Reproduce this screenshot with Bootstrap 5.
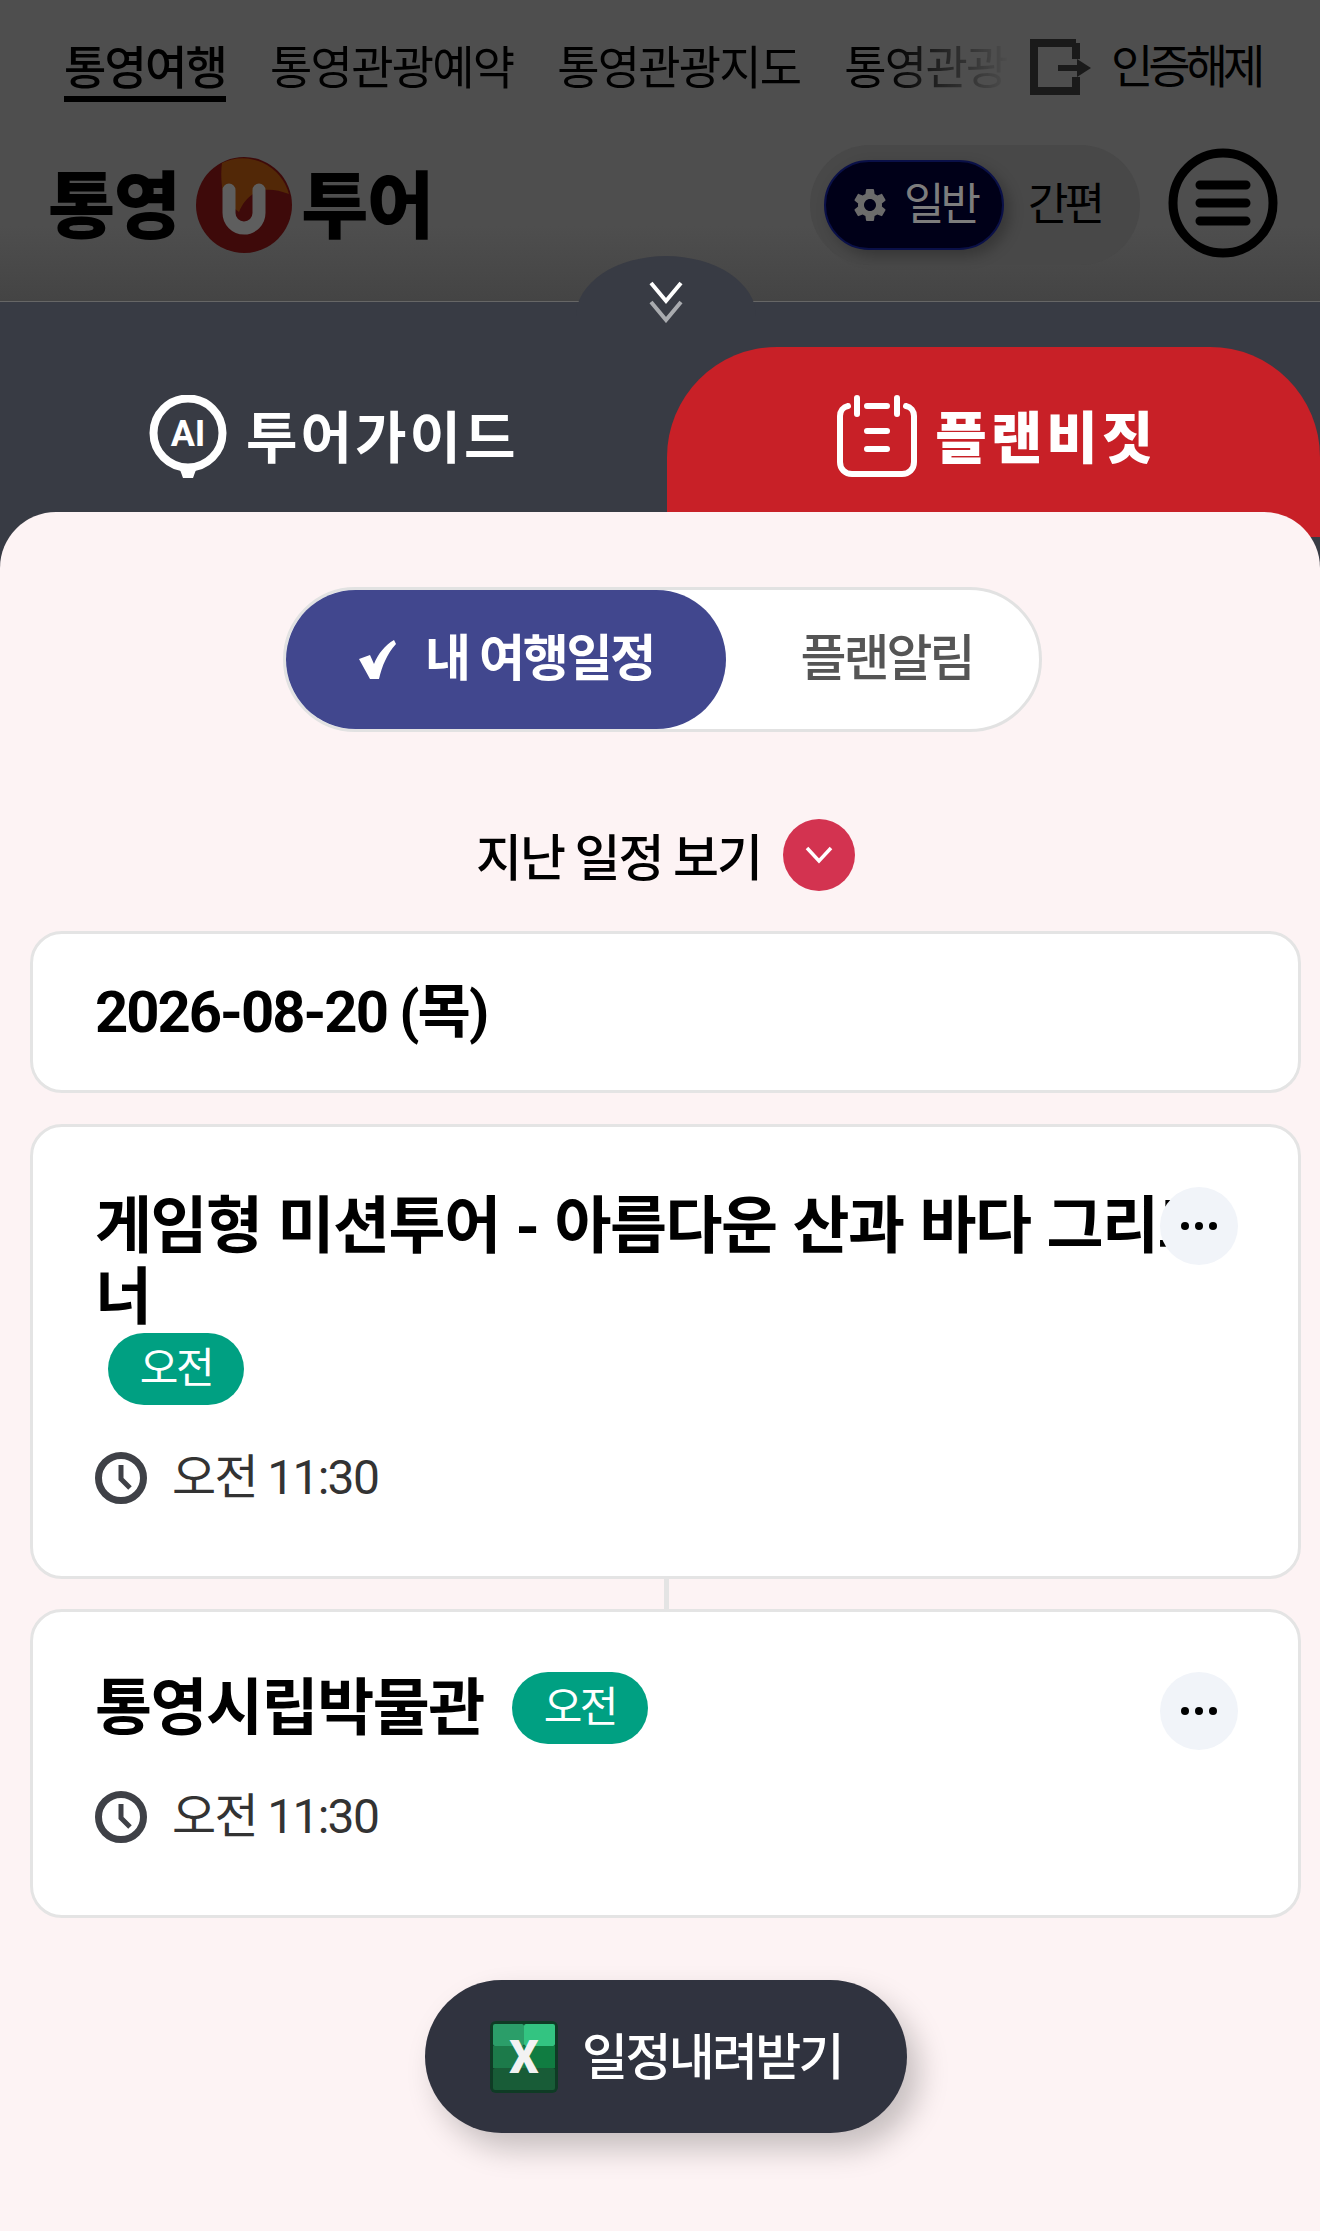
<!DOCTYPE html>
<html lang="ko">
<head>
    <meta charset="UTF-8">
    <meta name="viewport" content="width=device-width, initial-scale=1.0">
    <title>통영 U 투어</title>
    <link href="https://cdn.jsdelivr.net/npm/bootstrap@5.3.0/dist/css/bootstrap.min.css" rel="stylesheet">
    <style>
        body {
            width: 1320px;
            min-height: 2231px;
            background: #fdf3f4;
            font-family: Roboto, "Noto Sans CJK KR", sans-serif;
            overflow-x: hidden;
        }
        /* dimmed header behind the sheet */
        .top-area {
            height: 301px;
            background: linear-gradient(#4e4e4e 75%, #444 100%);
            color: #000;
        }
        .top-links {
            height: 130px;
            padding: 43px 58px 0 64px;
        }
        .top-menu {
            width: 946px;
            gap: 44px;
            -webkit-mask-image: linear-gradient(to right, #000 820px, transparent 946px);
            mask-image: linear-gradient(to right, #000 820px, transparent 946px);
        }
        .top-menu a {
            color: #000;
            font-size: 46px;
            line-height: 50px;
            letter-spacing: -1.8px;
            padding-bottom: 3px;
            white-space: nowrap;
            text-decoration: none;
        }
        .top-menu a.on {
            font-weight: 500;
            border-bottom: 6px solid #000;
        }
        .logout-link {
            font-size: 46px;
            line-height: 60px;
            letter-spacing: -5px;
            white-space: nowrap;
            margin-left: 20px;
            gap: 19px;
            margin-top: -6px;
        }
        .logo-row {
            padding: 15px 42px 0 48px;
        }
        .logo-txt {
            font-size: 73px;
            font-weight: 900;
            line-height: 1;
            letter-spacing: -1.5px;
            padding-top: 4px;
        }
        .mode-switch {
            width: 330px;
            height: 120px;
            padding: 15px 14px;
            margin-right: 28px;
            background: #484848;
            border-radius: 60px;
        }
        .mode-on {
            width: 180px;
            height: 90px;
            padding-left: 24px;
            gap: 14px;
            background: #000018;
            border: 2px solid #0a1048;
            border-radius: 45px;
            color: #7d7d7d;
            font-size: 44px;
            letter-spacing: -4px;
            box-shadow: 6px 6px 14px rgba(0, 0, 0, .25);
        }
        .mode-off {
            margin-left: 24px;
            font-size: 44px;
            letter-spacing: -4px;
        }
        /* bottom sheet */
        .sheet {
            background: #383b44;
            border-top: 1px solid #666;
            padding-top: 45px;
        }
        .sheet-handle {
            top: -46px;
            left: 576px;
            width: 180px;
            height: 80px;
            padding-top: 25px;
            background: #383b44;
            border-radius: 90px 90px 0 0 / 60px 60px 0 0;
            text-align: center;
        }
        .tab-item {
            width: 50.5%;
            height: 190px;
            padding-top: 48px;
            gap: 18px;
            color: #fff;
            font-size: 56px;
            font-weight: 700;
            line-height: 80px;
            letter-spacing: 3px;
        }
        .tab-red {
            width: 49.5%;
            padding-left: 8px;
            background: #c82027;
            border-radius: 110px 110px 0 0;
            font-weight: 900;
            letter-spacing: 4px;
        }
        .panel {
            margin-top: -25px;
            min-height: 1719px;
            padding: 75px 19px 0 30px;
            background: #fdf3f4;
            border-radius: 56px 56px 0 0;
        }
        .plan-toggle {
            width: 759px;
            height: 145px;
            margin-left: 253px;
            background: #fff;
            border: 3px solid #e2e2e2;
            border-radius: 73px;
        }
        .plan-on {
            width: 440px;
            height: 139px;
            gap: 29px;
            background: #41478e;
            border-radius: 70px;
            color: #fff;
            font-size: 50px;
            font-weight: 700;
            letter-spacing: -2.2px;
        }
        .plan-off {
            width: 313px;
            padding-left: 8px;
            color: #555;
            font-size: 50px;
            font-weight: 500;
            letter-spacing: -3px;
        }
        .past-row {
            height: 72px;
            margin: 87px 0 40px 0;
            gap: 22px;
            font-size: 50px;
            font-weight: 500;
            letter-spacing: -2px;
            color: #000;
        }
        .past-btn {
            width: 72px;
            height: 72px;
            background: #d33350;
            border-radius: 50%;
        }
        .sched-card {
            padding: 0 60px 0 62px;
            background: #fff;
            border: 3px solid #e4e4e4;
            border-radius: 32px;
            color: #000;
        }
        .date-card {
            height: 162px;
            margin-bottom: 31px;
            font-size: 58px;
            font-weight: 700;
            letter-spacing: -2px;
        }
        .sched-title {
            font-size: 62px;
            font-weight: 700;
            line-height: 71px;
            letter-spacing: -1.5px;
            word-spacing: 2px;
            margin: 0;
        }
        .tag-am {
            width: 136px;
            height: 72px;
            line-height: 72px;
            padding: 0;
            background: #00a082;
            font-size: 42px;
            font-weight: 400;
            letter-spacing: -2.5px;
            color: #fff;
        }
        .tag-wrap {
            margin-left: 13px;
        }
        .tag-side {
            margin-left: 28px;
        }
        .time-row {
            gap: 25px;
            font-size: 48px;
            line-height: 56px;
            letter-spacing: -1.7px;
            color: #333;
        }
        .more-btn {
            top: 60px;
            right: 60px;
            width: 78px;
            height: 78px;
            background: #f1f4f9;
            border-radius: 50%;
            gap: 6px;
        }
        .more-btn i {
            width: 8px;
            height: 8px;
            background: #000;
            border-radius: 50%;
        }
        .card-one {
            height: 455px;
            padding-top: 64px;
        }
        .card-one .time-row {
            margin-top: 45px;
        }
        .card-two {
            height: 309px;
            padding-top: 60px;
        }
        .card-two .time-row {
            margin-top: 45px;
        }
        .link-line {
            width: 5px;
            height: 30px;
            margin-left: 634px;
            background: #e4e4e4;
        }
        .excel-btn {
            width: 482px;
            height: 153px;
            margin: 62px 0 0 395px;
            gap: 24px;
            background: #30333f;
            border-radius: 77px;
            color: #fff;
            font-size: 50px;
            font-weight: 500;
            letter-spacing: -2.7px;
            box-shadow: 12px 16px 30px rgba(0, 0, 0, .22);
        }
    </style>
</head>
<body>
    <!-- dimmed header -->
    <div class="top-area">
        <div class="top-links d-flex align-items-start">
            <div class="top-menu d-flex align-items-start">
                <a class="on" href="#">통영여행</a>
                <a href="#">통영관광예약</a>
                <a href="#">통영관광지도</a>
                <a href="#">통영관광</a>
            </div>
            <div class="logout-link d-flex align-items-center">
                <svg width="62" height="56" viewBox="0 0 62 56" fill="none" stroke="#1a1a1a" stroke-width="8">
                    <path d="M46 4H4v48h42V38"/>
                    <path d="M46 4v16"/>
                    <path d="M28 29h22" stroke-width="6"/>
                    <path d="M47 20l14 9-14 9z" fill="#1a1a1a" stroke="none"/>
                </svg>
                <span>인증해제</span>
            </div>
        </div>
        <div class="logo-row d-flex align-items-center justify-content-between">
            <div class="d-flex align-items-center">
                <span class="logo-txt">통영</span>
                <svg class="ms-3 me-2" width="98" height="98" viewBox="0 0 98 98">
                    <circle cx="49" cy="49" r="48" fill="#3e0a0a"/>
                    <path d="M27 7a48 48 0 0 1 67 31c-10-4-18-5-26-4-12 2-20 12-24 22-8-6-15-12-17-25-1-10-1-17 0-24z" fill="#522807"/>
                    <path d="M34 34v23a15 15 0 0 0 30 0V34" fill="none" stroke="#5e5e5e" stroke-width="13" stroke-linecap="round"/>
                </svg>
                <span class="logo-txt">투어</span>
            </div>
            <div class="d-flex align-items-center">
                <div class="mode-switch d-flex align-items-center">
                    <div class="mode-on d-flex align-items-center">
                        <svg width="40" height="40" viewBox="0 0 24 24" fill="#6b6b6b"><path d="M19.14,12.94c.04-.3.06-.61.06-.94 0-.32-.02-.64-.07-.94l2.03-1.58c.18-.14.23-.41.12-.61l-1.92-3.32c-.12-.22-.37-.29-.59-.22l-2.39.96c-.5-.38-1.03-.7-1.62-.94l-.36-2.54c-.04-.24-.24-.41-.48-.41h-3.84c-.24,0-.43.17-.47.41l-.36,2.54c-.59.24-1.13.57-1.62.94l-2.39-.96c-.22-.08-.47,0-.59.22L2.74,8.87c-.12.21-.08.47.12.61l2.03,1.58c-.05.3-.09.63-.09.94s.02.64.07.94l-2.03,1.58c-.18.14-.23.41-.12.61l1.92,3.32c.12.22.37.29.59.22l2.39-.96c.5.38,1.03.7,1.62.94l.36,2.54c.05.24.24.41.48.41h3.84c.24,0,.44-.17.47-.41l.36-2.54c.59-.24,1.13-.56,1.62-.94l2.39.96c.22.08.47,0,.59-.22l1.92-3.32c.12-.22.07-.47-.12-.61l-2.01-1.58zM12,15.6c-1.98,0-3.6-1.62-3.6-3.6s1.62-3.6,3.6-3.6,3.6,1.62,3.6,3.6-1.62,3.6-3.6,3.6z"/></svg>
                        <span>일반</span>
                    </div>
                    <span class="mode-off">간편</span>
                </div>
                <svg class="mb-1" width="110" height="110" viewBox="0 0 110 110" fill="none" stroke="#000" stroke-linecap="round">
                    <circle cx="55" cy="55" r="50" stroke-width="9"/>
                    <path d="M32 37h46M32 55h46M32 73h46" stroke-width="9"/>
                </svg>
            </div>
        </div>
    </div>

    <!-- bottom sheet -->
    <div class="sheet position-relative">
        <div class="sheet-handle position-absolute">
            <svg width="34" height="42" viewBox="0 0 34 42" fill="none" stroke-width="4">
                <path d="M2 2l15 18L32 2" stroke="#fff"/>
                <path d="M2 21l15 18 15-18" stroke="#a9abaf"/>
            </svg>
        </div>
        <div class="d-flex">
            <div class="tab-item d-flex justify-content-center align-items-start">
                <svg class="flex-shrink-0" width="80" height="84" viewBox="0 0 80 84" fill="none" stroke="#fff">
                    <circle cx="40" cy="38" r="34.5" stroke-width="8"/>
                    <path d="M31 72h18l-4 11H35z" fill="#fff" stroke="none"/>
                    <text x="40" y="51" text-anchor="middle" font-family="Roboto" font-weight="700" font-size="36" letter-spacing="0" fill="#fff" stroke="none">AI</text>
                </svg>
                <span class="mt-1">투어가이드</span>
            </div>
            <div class="tab-item tab-red d-flex justify-content-center align-items-start">
                <svg class="flex-shrink-0" width="80" height="82" viewBox="0 0 80 82" fill="none" stroke="#fff" stroke-width="6" stroke-linecap="round">
                    <path d="M11 11C6 12 3 16 3 21v46c0 7 5 12 12 12h50c7 0 12-5 12-12V21c0-5-3-9-8-10"/>
                    <path d="M20 3v16M60 3v16M30 11h20M30 36h20M30 54h20"/>
                </svg>
                <span class="mt-1">플랜비짓</span>
            </div>
        </div>

        <div class="panel position-relative">
            <div class="plan-toggle d-flex align-items-center">
                <div class="plan-on d-flex align-items-center justify-content-center flex-shrink-0">
                    <svg width="38" height="40" viewBox="0 0 38 40"><path d="M1 19l11-4 4 9C20 14 27 5 36 0l2 4C29 14 24 26 21 39h-9z" fill="#fff"/></svg>
                    <span>내 여행일정</span>
                </div>
                <div class="plan-off text-center">플랜알림</div>
            </div>

            <div class="past-row d-flex align-items-center justify-content-center">
                <span class="pt-2">지난 일정 보기</span>
                <span class="past-btn d-flex align-items-center justify-content-center">
                    <svg width="30" height="18" viewBox="0 0 30 18" fill="none" stroke="#fff" stroke-width="3.5"><path d="M3 2l12 13L27 2"/></svg>
                </span>
            </div>

            <div class="sched-card date-card d-flex align-items-center">2026-08-20 (목)</div>

            <div class="sched-card card-one position-relative">
                <h2 class="sched-title">게임형 미션투어 - 아름다운 산과 바다 그리고 너</h2>
                <div class="d-flex">
                    <span class="badge rounded-pill tag-am tag-wrap">오전</span>
                </div>
                <div class="time-row d-flex align-items-center">
                    <svg width="52" height="52" viewBox="0 0 52 52" fill="none" stroke="#3f4147"><circle cx="26" cy="26" r="22.5" stroke-width="7"/><path d="M26 13v14l9 9" stroke-width="5"/></svg>
                    <span>오전 11:30</span>
                </div>
                <div class="more-btn position-absolute d-flex align-items-center justify-content-center"><i></i><i></i><i></i></div>
            </div>

            <div class="link-line"></div>

            <div class="sched-card card-two position-relative">
                <div class="d-flex align-items-center">
                    <h2 class="sched-title">통영시립박물관</h2>
                    <span class="badge rounded-pill tag-am tag-side">오전</span>
                </div>
                <div class="time-row d-flex align-items-center">
                    <svg width="52" height="52" viewBox="0 0 52 52" fill="none" stroke="#3f4147"><circle cx="26" cy="26" r="22.5" stroke-width="7"/><path d="M26 13v14l9 9" stroke-width="5"/></svg>
                    <span>오전 11:30</span>
                </div>
                <div class="more-btn position-absolute d-flex align-items-center justify-content-center"><i></i><i></i><i></i></div>
            </div>

            <div class="excel-btn d-flex align-items-center justify-content-center">
                <svg width="68" height="72" viewBox="0 0 68 72">
                    <rect width="68" height="72" rx="6" fill="#0f3b25"/>
                    <rect x="3" y="3" width="31" height="22" rx="2" fill="#2b9e69"/>
                    <rect x="34" y="3" width="31" height="22" rx="2" fill="#33c481"/>
                    <rect x="3" y="25" width="31" height="22" fill="#1c7a4a"/>
                    <rect x="34" y="25" width="31" height="22" fill="#107c41"/>
                    <rect x="3" y="47" width="62" height="22" rx="2" fill="#185c37"/>
                    <text x="34" y="52" text-anchor="middle" font-family="Roboto" font-weight="900" font-size="46" letter-spacing="0" fill="#f2f2f2">X</text>
                </svg>
                <span class="pt-1">일정내려받기</span>
            </div>
        </div>
    </div>

    <script src="https://cdn.jsdelivr.net/npm/bootstrap@5.3.0/dist/js/bootstrap.bundle.min.js"></script>
</body>
</html>
